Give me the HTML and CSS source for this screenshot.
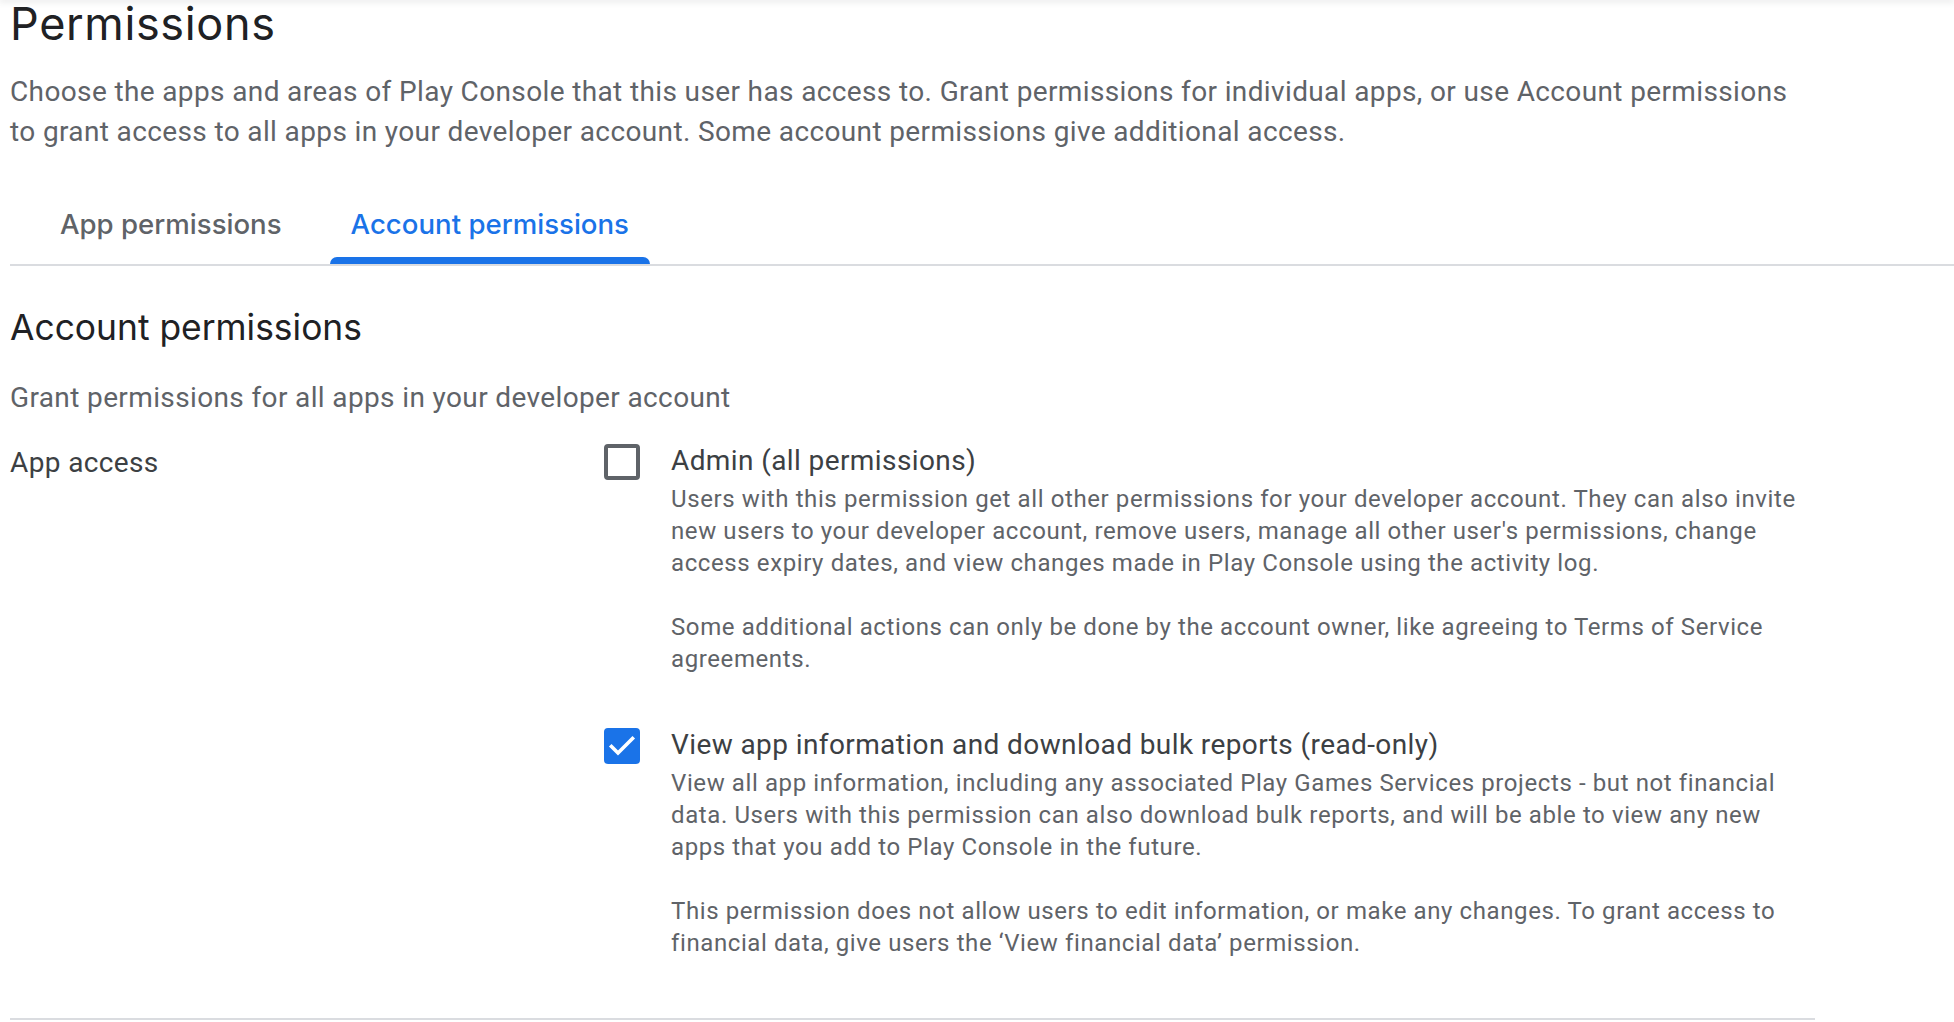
FILE: index.html
```html
<!DOCTYPE html>
<html lang="en">
<head>
<meta charset="utf-8">
<title>Permissions</title>
<link rel="stylesheet" href="styles.css">
</head>
<body>
<div class="appbar-shadow"></div>
<main class="page">
  <h1 class="title">Permissions</h1>
  <p class="intro">Choose the apps and areas of Play Console that this user has access to. Grant permissions for individual apps, or use Account permissions to grant access to all apps in your developer account. Some account permissions give additional access.</p>

  <nav class="tabs">
    <div class="tab">App permissions</div>
    <div class="tab active">Account permissions</div>
  </nav>

  <section class="content">
    <h2 class="heading">Account permissions</h2>
    <p class="sub">Grant permissions for all apps in your developer account</p>

    <div class="row">
      <div class="label">App access</div>
      <div class="options">
        <div class="option">
          <span class="cb"></span>
          <div class="opt-body">
            <div class="opt-title">Admin (all permissions)</div>
            <p class="desc">Users with this permission get all other permissions for your developer account. They can also invite new users to your developer account, remove users, manage all other user's permissions, change access expiry dates, and view changes made in Play Console using the activity log.</p>
            <p class="desc">Some additional actions can only be done by the account owner, like agreeing to Terms of Service agreements.</p>
          </div>
        </div>
        <div class="option">
          <span class="cb checked">
            <svg viewBox="0 0 36 36" width="36" height="36"><polyline points="7.5,18.5 14,25 28.5,10.5" fill="none" stroke="#fff" stroke-width="3.6" stroke-linecap="square"/></svg>
          </span>
          <div class="opt-body">
            <div class="opt-title">View app information and download bulk reports (read-only)</div>
            <p class="desc">View all app information, including any associated Play Games Services projects - but not financial data. Users with this permission can also download bulk reports, and will be able to view any new apps that you add to Play Console in the future.</p>
            <p class="desc">This permission does not allow users to edit information, or make any changes. To grant access to financial data, give users the ‘View financial data’ permission.</p>
          </div>
        </div>
      </div>
    </div>

    <div class="bottom-rule"></div>
  </section>
</main>
</body>
</html>
```

FILE: styles.css
```css
html, body {
  margin: 0;
  background: #ffffff;
}

body {
  font-family: Roboto, "Liberation Sans", Arial, sans-serif;
  color: #202124;
}

.appbar-shadow {
  height: 0;
  box-shadow: 0 0 6px 1px rgba(60, 64, 67, 0.25);
}

.page {
  padding-left: 10px;
}

.title {
  margin: 0;
  font-family: Inter, Roboto, sans-serif;
  font-weight: 400;
  font-size: 45px;
  line-height: 48px;
  letter-spacing: 0.65px;
  color: #202124;
}

.intro {
  margin: 24px 0 0;
  max-width: 1805px;
  font-size: 28px;
  line-height: 40px;
  letter-spacing: 0.37px;
  color: #5f6368;
}

.tabs {
  display: flex;
  gap: 27px;
  padding-left: 29px;
  margin-top: 32px;
  border-bottom: 2px solid #dadce0;
}

.tab {
  position: relative;
  height: 80px;
  padding: 0 21px;
  display: flex;
  align-items: center;
  font-family: Inter, Roboto, sans-serif;
  font-weight: 500;
  font-size: 27.6px;
  line-height: 34px;
  color: #5f6368;
}

.tab.active {
  color: #1a73e8;
}

.tab.active::after {
  content: "";
  position: absolute;
  left: 0;
  right: 0;
  bottom: 0;
  height: 7px;
  background: #1a73e8;
  border-radius: 7px 7px 0 0;
}

.content {
  max-width: 1805px;
}

.heading {
  margin: 40px 0 0;
  font-family: Inter, Roboto, sans-serif;
  font-weight: 400;
  font-size: 35.4px;
  line-height: 44px;
  color: #202124;
}

.sub {
  margin: 28px 0 0;
  font-size: 28px;
  line-height: 40px;
  letter-spacing: 0.37px;
  color: #5f6368;
}

.row {
  display: grid;
  grid-template-columns: 594px 1fr;
  margin-top: 25px;
}

.label {
  font-size: 28px;
  line-height: 40px;
  letter-spacing: 0.37px;
  color: #3c4043;
}

.options {
  display: flex;
  flex-direction: column;
  gap: 52px;
}

.option {
  display: flex;
  align-items: flex-start;
  gap: 31px;
}

.cb {
  flex: none;
  box-sizing: border-box;
  width: 36px;
  height: 36px;
  margin-top: 1px;
  border: 4px solid #5f6368;
  border-radius: 4px;
  display: flex;
  align-items: center;
  justify-content: center;
  overflow: hidden;
}

.cb.checked {
  background: #1a73e8;
  border-color: #1a73e8;
}

.cb svg {
  flex: none;
}

.opt-title {
  padding-top: 1px;
  margin-bottom: 5px;
  font-size: 28px;
  line-height: 34px;
  letter-spacing: 0.4px;
  color: #3c4043;
}

.desc {
  margin: 0;
  font-size: 24px;
  line-height: 32px;
  letter-spacing: 0.6px;
  color: #5f6368;
}

.desc + .desc {
  margin-top: 32px;
}

.bottom-rule {
  height: 2px;
  margin-top: 59px;
  background: #dadce0;
}
```
